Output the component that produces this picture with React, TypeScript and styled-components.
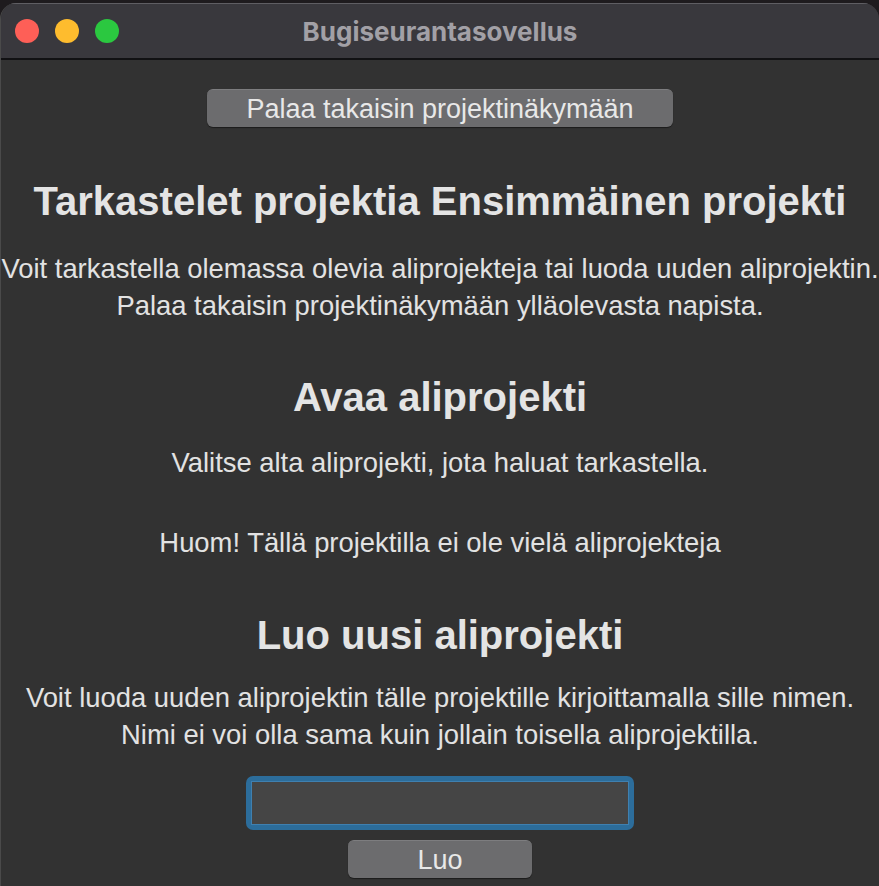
import React from "react";
import styled, { createGlobalStyle } from "styled-components";

const GlobalStyle = createGlobalStyle`
  html, body {
    margin: 0;
    padding: 0;
    background: #1e1b1e;
    height: 886px;
    overflow: hidden;
  }
  #root { height: 886px; }
  * { box-sizing: border-box; }
`;

const Window = styled.div`
  margin-top: 3px;
  height: 883px;
  border-radius: 16px 16px 0 0;
  overflow: hidden;
  background: #323232;
  display: flex;
  flex-direction: column;
  border-left: 1px solid #4a4a4a;
`;

const TitleBar = styled.div`
  position: relative;
  height: 57px;
  flex: none;
  background: #39383d;
  border-top: 1px solid #5f5e63;
  border-bottom: 2px solid #111113;
  display: flex;
  align-items: center;
  justify-content: center;
`;

const Lights = styled.div`
  position: absolute;
  left: 14px;
  top: 15px;
  display: flex;
  gap: 16px;
`;

const Light = styled.span<{ $c: string }>`
  width: 24px;
  height: 24px;
  border-radius: 50%;
  background: ${(p) => p.$c};
`;

const Title = styled.div`
  font-family: Inter, "Liberation Sans", sans-serif;
  font-weight: 700;
  font-size: 26px;
  color: #a2a0a6;
  margin-top: 1px;
`;

const Content = styled.div`
  flex: 1;
  display: flex;
  flex-direction: column;
  align-items: center;
  font-family: "Liberation Sans", Arial, sans-serif;
  color: #e2e2e2;
  text-align: center;
`;

const Button = styled.button<{ $w: number; $mt: number }>`
  width: ${(p) => p.$w}px;
  height: 38px;
  margin-top: ${(p) => p.$mt}px;
  flex: none;
  border: none;
  border-top: 1px solid #7d7d7f;
  border-radius: 6px;
  background: #6c6c6e;
  box-shadow: 0 1px 1px rgba(0, 0, 0, 0.45);
  color: #e8e8e8;
  font-family: "Liberation Sans", Arial, sans-serif;
  font-size: 27px;
  line-height: 36px;
  padding: 0;
  display: flex;
  align-items: center;
  justify-content: center;
`;

const Heading = styled.h1<{ $mt: number }>`
  margin: ${(p) => p.$mt}px 0 0;
  font-size: 40px;
  line-height: 48px;
  font-weight: 700;
  color: #e4e4e4;
  white-space: nowrap;
`;

const Para = styled.p<{ $mt: number }>`
  margin: ${(p) => p.$mt}px 0 0;
  font-size: 27.4px;
  line-height: 37px;
  white-space: nowrap;
`;

const FocusRing = styled.div`
  margin-top: 23px;
  width: 388px;
  height: 54px;
  padding: 5px;
  border-radius: 7px;
  background: #2c6d9b;
  flex: none;
`;

const Field = styled.input`
  width: 100%;
  height: 100%;
  background: #454545;
  border: 1px solid #3f80b0;
  outline: none;
  color: #e2e2e2;
  font-family: "Liberation Sans", Arial, sans-serif;
  font-size: 24px;
  padding: 0 6px;
`;

export default function App() {
  return (
    <>
      <GlobalStyle />
      <Window>
        <TitleBar>
          <Lights>
            <Light $c="#fe5f57" />
            <Light $c="#febc2e" />
            <Light $c="#2bc840" />
          </Lights>
          <Title>Bugiseurantasovellus</Title>
        </TitleBar>
        <Content>
          <Button $w={466} $mt={29}>Palaa takaisin projektinäkymään</Button>
          <Heading $mt={50}>Tarkastelet projektia Ensimmäinen projekti</Heading>
          <Para $mt={25}>
            Voit tarkastella olemassa olevia aliprojekteja tai luoda uuden aliprojektin.
            <br />
            Palaa takaisin projektinäkymään ylläolevasta napista.
          </Para>
          <Heading $mt={49}>Avaa aliprojekti</Heading>
          <Para $mt={23}>Valitse alta aliprojekti, jota haluat tarkastella.</Para>
          <Para $mt={43}>Huom! Tällä projektilla ei ole vielä aliprojekteja</Para>
          <Heading $mt={50}>Luo uusi aliprojekti</Heading>
          <Para $mt={20}>
            Voit luoda uuden aliprojektin tälle projektille kirjoittamalla sille nimen.
            <br />
            Nimi ei voi olla sama kuin jollain toisella aliprojektilla.
          </Para>
          <FocusRing>
            <Field type="text" />
          </FocusRing>
          <Button $w={184} $mt={10}>Luo</Button>
        </Content>
      </Window>
    </>
  );
}
